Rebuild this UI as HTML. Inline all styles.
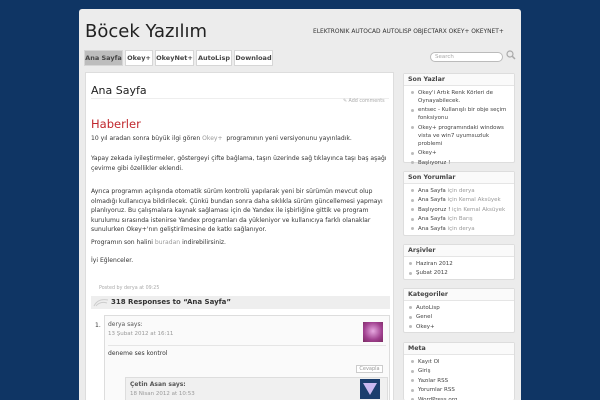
<!DOCTYPE html>
<html style="overflow:hidden;height:400px"><head><meta charset="utf-8"><style>
*{margin:0;padding:0;box-sizing:border-box}
body{width:600px;height:400px;overflow:hidden;background:#0f3564;font-family:"DejaVu Sans","Liberation Sans",sans-serif;position:relative}
.a{position:absolute;white-space:nowrap}
#wrap{position:absolute;left:79px;top:9px;width:442px;height:391px;background:#ececec;border-radius:3px 3px 0 0}
#main{position:absolute;left:85px;top:72px;width:309px;height:328px;background:#fff;border:1px solid #ddd;border-bottom:none}
.t{font-size:6.05px;color:#333}
.tab{position:absolute;top:50px;height:16px;background:#fff;border:1px solid #d6d6d6;font-size:6.5px;font-weight:bold;color:#444;text-align:center;line-height:15px}
.box{position:absolute;left:403px;width:112px;background:#fff;border:1px solid #ddd;border-radius:2px}
.box h3{font-size:6.3px;font-weight:bold;color:#444;height:12px;line-height:12px;padding-left:4px;border-bottom:1px solid #e5e5e5;background:#fafafa}
.box ul{list-style:none;font-size:5.5px;color:#444;padding:2.5px 4px 0 6px}
.box li{line-height:8px;margin-bottom:1.5px;padding-left:8px;position:relative;white-space:normal}
.box li:before{content:"";position:absolute;left:1px;top:2.5px;width:3px;height:3px;background:#bbb;border-radius:50%}
.gr{color:#999}
</style></head><body>
<div id="wrap"></div>
<div class="a" style="left:85px;top:21px;font-size:18px;color:#222">Böcek Yazılım</div>
<div class="a" style="left:313px;top:29px;font-size:5.9px;color:#333">ELEKTRONIK AUTOCAD AUTOLISP OBJECTARX OKEY+ OKEYNET+</div>
<div class="tab" style="left:84px;width:39px;background:#bdbdbd;color:#444">Ana Sayfa</div>
<div class="tab" style="left:125px;width:28px">Okey+</div>
<div class="tab" style="left:155px;width:39px">OkeyNet+</div>
<div class="tab" style="left:196px;width:36px">AutoLisp</div>
<div class="tab" style="left:234px;width:39px">Download</div>
<div class="a" style="left:430px;top:52px;width:73px;height:10px;background:#fff;border:1px solid #bbb;border-radius:5px;font-size:5.5px;color:#aaa;padding-left:4px;line-height:8px">Search</div>
<svg class="a" style="left:506px;top:50px" width="10" height="10"><circle cx="4" cy="4" r="3" fill="none" stroke="#aaa" stroke-width="1.2"/><line x1="6" y1="6" x2="9" y2="9" stroke="#aaa" stroke-width="1.5"/></svg>
<div id="main"></div>
<div class="a" style="left:91px;top:84px;font-size:11px;color:#222">Ana Sayfa</div>
<div class="a" style="left:91px;top:98px;width:298px;height:1px;background:#eee"></div>
<div class="a" style="left:343px;top:99px;font-size:4.8px;color:#aaa">✎ Add comments</div>
<div class="a" style="left:91px;top:117px;font-size:11.5px;color:#c0282e">Haberler</div>
<div class="a t" style="left:91px;top:135px">10 yıl aradan sonra büyük ilgi gören <span class="gr">Okey+</span>&nbsp; programının yeni versiyonunu yayınladık.</div>
<div class="a t" style="left:91px;top:154px;line-height:10px">Yapay zekada iyileştirmeler, göstergeyi çifte bağlama, taşın üzerinde sağ tıklayınca taşı baş aşağı<br>çevirme gibi özellikler eklendi.</div>
<div class="a t" style="left:91px;top:187px;line-height:9.5px">Ayrıca programın açılışında otomatik sürüm kontrolü yapılarak yeni bir sürümün mevcut olup<br>olmadığı kullanıcıya bildirilecek. Çünkü bundan sonra daha sıklıkla sürüm güncellemesi yapmayı<br>planlıyoruz. Bu çalışmalara kaynak sağlaması için de Yandex ile işbirliğine gittik ve program<br>kurulumu sırasında istenirse Yandex programları da yükleniyor ve kullanıcıya farklı olanaklar<br>sunulurken Okey+'nın geliştirilmesine de katkı sağlanıyor.</div>
<div class="a t" style="left:91px;top:239px">Programın son halini <span class="gr">buradan</span> indirebilirsiniz.</div>
<div class="a t" style="left:91px;top:257px">İyi Eğlenceler.</div>
<div class="a" style="left:99px;top:286px;font-size:4.8px;color:#aaa">Posted by derya at 09:25</div>
<div class="a" style="left:91px;top:296px;width:299px;height:13px;background:#eee"></div>
<svg class="a" style="left:93px;top:297px" width="16" height="10"><path d="M1 9 Q5 1 15 3" fill="none" stroke="#ccc"/><path d="M3 9 Q7 4 14 6" fill="none" stroke="#ccc"/></svg>
<div class="a" style="left:111px;top:298px;font-size:7px;font-weight:bold;color:#333">318 Responses to “Ana Sayfa”</div>
<div class="a" style="left:104px;top:315px;width:286px;height:90px;background:#fafafa;border:1px solid #ddd"></div>
<div class="a t" style="left:95px;top:322px">1.</div>
<div class="a" style="left:108px;top:321px;font-size:6px;color:#555">derya says:</div>
<div class="a" style="left:108px;top:331px;font-size:5.5px;color:#999">13 Şubat 2012 at 16:11</div>
<div class="a" style="left:363px;top:322px;width:20px;height:20px;background:radial-gradient(circle at 50% 45%,#e6a8e0,#a0408f 60%,#7a2a60)"></div>
<div class="a" style="left:108px;top:345px;width:278px;height:1px;background:#e5e5e5"></div>
<div class="a t" style="left:108px;top:350px">deneme ses kontrol</div>
<div class="a" style="left:356px;top:365px;width:27px;height:8px;border:1px solid #ccc;background:#fff;font-size:5px;color:#999;text-align:center;line-height:6px">Cevapla</div>
<div class="a" style="left:125px;top:377px;width:263px;height:30px;background:#f0f0f0;border:1px solid #ddd"></div>
<div class="a" style="left:130px;top:381px;font-size:6px;font-weight:bold;color:#555">Çetin Asan says:</div>
<div class="a" style="left:130px;top:391px;font-size:5.5px;color:#999">18 Nisan 2012 at 10:53</div>
<div class="a" style="left:360px;top:379px;width:20px;height:20px;background:#1a3d6d"><svg width="20" height="20"><polygon points="3,4 17,4 10,16" fill="#c9b8f0"/></svg></div>

<div class="box" style="top:73px;height:90px"><h3>Son Yazlar</h3><ul><li>Okey'i Artık Renk Körleri de Oynayabilecek.</li><li>entsec - Kullanışlı bir obje seçim fonksiyonu</li><li>Okey+ programındaki windows vista ve win7 uyumsuzluk problemi</li><li>Okey+</li><li>Başlıyoruz !</li></ul></div>
<div class="box" style="top:171px;height:65px"><h3>Son Yorumlar</h3><ul><li>Ana Sayfa <span class="gr">için derya</span></li><li>Ana Sayfa <span class="gr">için Kemal Aksüyek</span></li><li>Başlıyoruz ! <span class="gr">için Kemal Aksüyek</span></li><li>Ana Sayfa <span class="gr">için Barış</span></li><li>Ana Sayfa <span class="gr">için derya</span></li></ul></div>
<div class="box" style="top:244px;height:36px"><h3>Arşivler</h3><ul style="padding-left:4px"><li>Haziran 2012</li><li>Şubat 2012</li></ul></div>
<div class="box" style="top:288px;height:45px"><h3>Kategoriler</h3><ul style="padding-left:4px"><li>AutoLisp</li><li>Genel</li><li>Okey+</li></ul></div>
<div class="box" style="top:342px;height:58px;border-bottom:none"><h3>Meta</h3><ul><li>Kayıt Ol</li><li>Giriş</li><li>Yazılar RSS</li><li>Yorumlar RSS</li><li>WordPress.org</li></ul></div>
</body></html>
